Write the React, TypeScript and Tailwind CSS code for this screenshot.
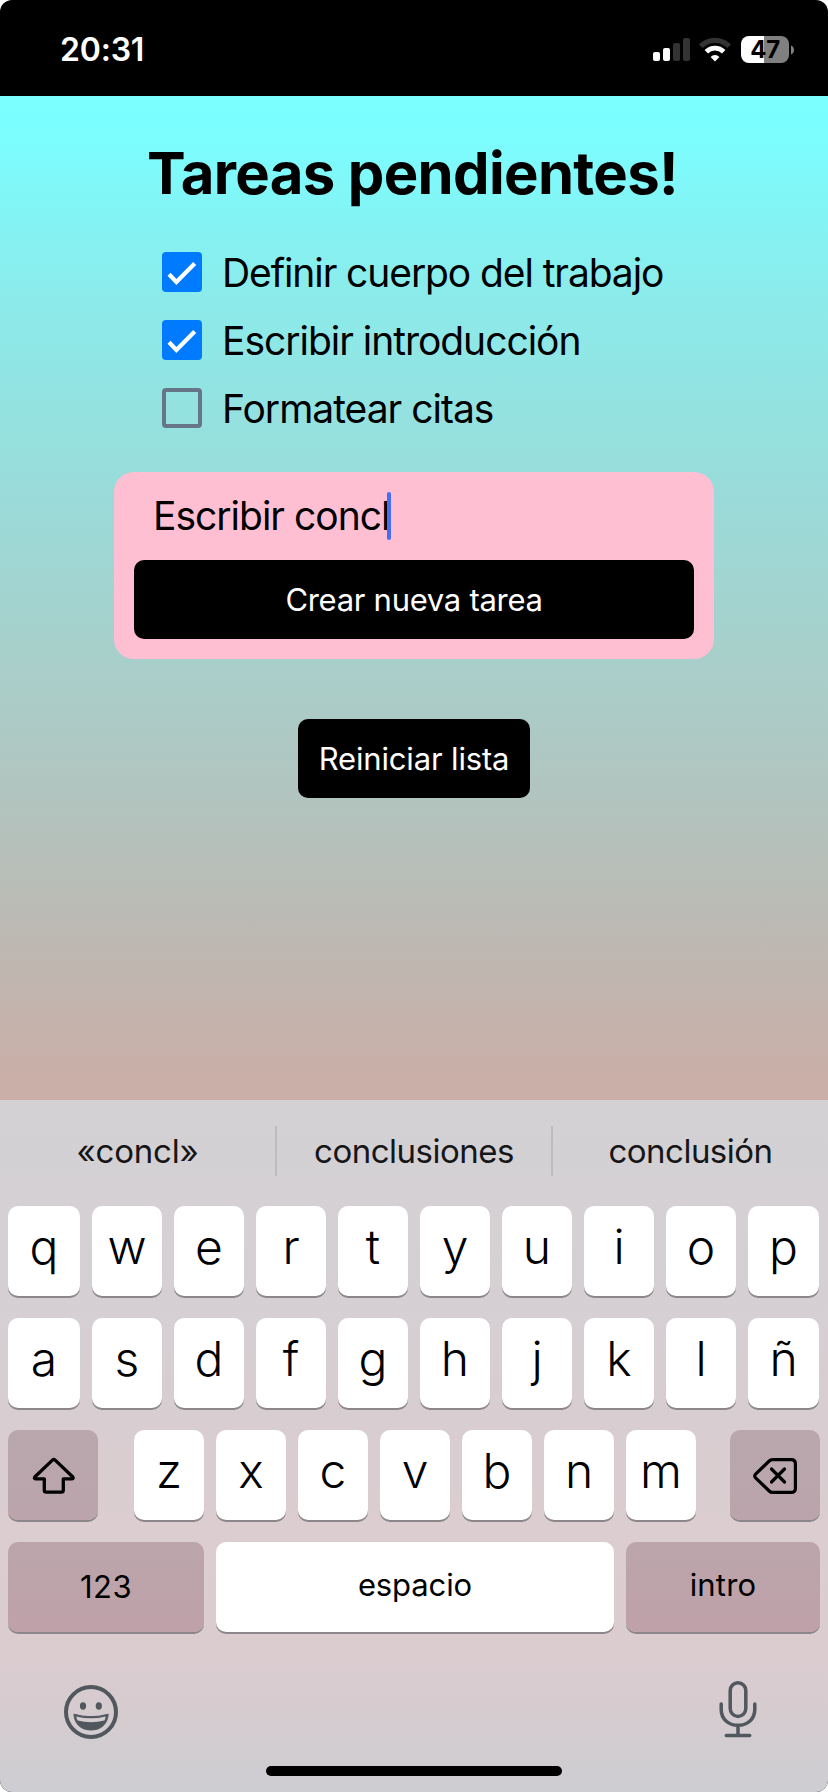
import React from "react";

function SignalIcon() {
  return (
    <svg width="37" height="23" viewBox="0 0 37 23" aria-hidden="true">
      <rect x="0" y="14" width="7" height="9" rx="2" fill="#fff" />
      <rect x="10" y="10" width="7" height="13" rx="2" fill="#fff" />
      <rect x="20" y="5" width="7" height="18" rx="2" fill="#333" />
      <rect x="30" y="0" width="7" height="23" rx="2" fill="#333" />
    </svg>
  );
}

function WifiIcon() {
  return (
    <svg width="32" height="25" viewBox="0 0 32 25" aria-hidden="true">
      <path d="M1.8 9.2a20 20 0 0 1 28.4 0" fill="none" stroke="#333" strokeWidth="5.2" />
      <path d="M7.3 14.7a12.3 12.3 0 0 1 17.4 0" fill="none" stroke="#fff" strokeWidth="4.8" />
      <path d="M16 24.4l-4.4-4.5a6.3 6.3 0 0 1 8.8 0z" fill="#fff" />
    </svg>
  );
}

function Battery() {
  return (
    <div className="flex items-center gap-[2px]">
      <div className="flex h-[27px] w-12 items-center justify-center rounded-[8px] bg-[linear-gradient(90deg,#fff_23px,#808080_23px)] text-[24px] leading-none font-bold tracking-[-0.3px] text-black">
        47
      </div>
      <svg width="3" height="10" viewBox="0 0 3 10" aria-hidden="true">
        <path d="M0 0.5C2 1 3 3 3 5S2 9 0 9.5z" fill="#808080" />
      </svg>
    </div>
  );
}

function CheckBox({ checked }: { checked: boolean }) {
  if (!checked) return <span className="h-10 w-10 shrink-0 rounded-[4px] border-4 border-[#667587]" />;
  return (
    <span className="h-10 w-10 shrink-0 rounded-[4px] bg-[#007aff]">
      <svg width="40" height="40" viewBox="0 0 40 40" aria-hidden="true">
        <path d="M7 22.3L14.4 30L32.7 11.5" fill="none" stroke="#fff" strokeWidth="4.2" />
      </svg>
    </span>
  );
}

function ShiftIcon() {
  return (
    <svg width="44" height="38" viewBox="-0.8 -0.8 44 38" fill="none" stroke="#000" strokeWidth="3.3" strokeLinejoin="round" aria-hidden="true">
      <path d="M20.9 3.1Q22 2.1 23.1 3.1L40.8 20Q42.2 22 40.2 22H31.5V33.200Q31.500 35.400 29.500 35.400H14.500Q12.500 35.400 12.500 33.200V22H3.800Q1.800 22 3.200 20Z" />
    </svg>
  );
}

function DeleteIcon() {
  return (
    <svg width="46" height="38" viewBox="0 -1 46 38" fill="none" stroke="#000" strokeWidth="3.2" strokeLinecap="round" strokeLinejoin="round" aria-hidden="true">
      <path d="M20.5 2.600H39.200Q43.400 2.600 43.400 6.800V31.200Q43.400 35.400 39.200 35.400H20.500Q18.600 35.400 17.200 34L3.600 20.800Q1.800 19 3.600 17.200L17.200 4Q18.600 2.600 20.500 2.600Z" />
      <path d="M19.5 12L32.500 25M32.500 12L19.500 25" />
    </svg>
  );
}

function EmojiIcon() {
  return (
    <svg width="54" height="54" viewBox="0 0 54 54" aria-hidden="true">
      <circle cx="27" cy="27" r="25" fill="none" stroke="#50575d" strokeWidth="4" />
      <ellipse cx="19" cy="21" rx="3.1" ry="3.7" fill="#50575d" />
      <ellipse cx="34.8" cy="21" rx="3.1" ry="3.7" fill="#50575d" />
      <path d="M9.9 29.2Q27 34.2 44.2 29.2C43.5 38.5 37.5 45 27 45S10.500 38.500 9.900 29.200Z" fill="#50575d" stroke="#50575d" strokeWidth="1" strokeLinejoin="round" />
      <path d="M12.300 31.400Q27 35.200 41.700 31.400Q41.300 33.800 40.400 35.500Q27 38.800 13.700 35.500Q12.600 33.800 12.300 31.400Z" fill="#d5cdd1" />
    </svg>
  );
}

function MicIcon() {
  return (
    <svg width="38" height="57" viewBox="0 0 38 57" fill="none" stroke="#50575d" strokeWidth="3.5" strokeLinecap="round" aria-hidden="true">
      <rect x="11.200" y="1.800" width="15.600" height="33.600" rx="7.800" />
      <path d="M2.200 23v5.500C2.200 38 9.500 44.300 19 44.300S35.800 38 35.800 28.500V23M19 44.300v10M7.300 54.500h23.400" />
    </svg>
  );
}

const keyShadow = "shadow-[0_2px_0_#8c868a]";

function LetterKey({ children }: { children: string }) {
  return (
    <button className={`flex h-[90px] min-w-0 items-center justify-center rounded-[10px] bg-white pb-[9px] text-[48px] leading-none font-[350] ${keyShadow}`}>
      {children}
    </button>
  );
}

const darkKey = `flex items-center justify-center rounded-[10px] text-[31px] leading-none ${keyShadow}`;

const tasks = [
  { text: "Definir cuerpo del trabajo", done: true, tracking: "tracking-[-1.1px]" },
  { text: "Escribir introducción", done: true, tracking: "tracking-[-1.03px]" },
  { text: "Formatear citas", done: false, tracking: "tracking-[-1px]" },
];

export default function App() {
  return (
    <div className="h-[1792px] w-[828px] bg-white font-['Inter','Liberation_Sans',sans-serif] text-black">
      <div className="flex h-full flex-col overflow-hidden rounded-[12px] bg-black">
        <header className="flex h-24 shrink-0 items-center justify-between pt-[3px] pr-[34px] pl-[60px] text-white">
          <div className="text-[32px] leading-none font-semibold tracking-[-0.2px]">20:31</div>
          <div className="flex items-center gap-[10px]">
            <div className="-mr-px">
              <SignalIcon />
            </div>
            <WifiIcon />
            <Battery />
          </div>
        </header>

        <main className="flex h-[1004px] shrink-0 flex-col items-center bg-[linear-gradient(180deg,#7affff_0%,#7cfdff_4%,#8bebea_20%,#9adbd9_40%,#a8cfca_56%,#b2c4bf_70%,#bdb8b2_84%,#caafa8_98%,#caafa8_100%)]">
          <h1 className="mt-[41px] pr-[3px] text-[58px] leading-[72px] font-bold tracking-[-0.65px] whitespace-nowrap">Tareas pendientes!</h1>
          <ul className="mt-[43px] flex w-[504px] flex-col gap-7">
            {tasks.map((t) => (
              <li key={t.text} className="flex h-10 items-center gap-5">
                <CheckBox checked={t.done} />
                <span className={`text-[39px] leading-none whitespace-nowrap ${t.tracking}`}>{t.text}</span>
              </li>
            ))}
          </ul>
          <form className="mt-11 flex h-[187px] w-[600px] flex-col justify-between rounded-[20px] bg-[#ffbfd3] px-5 pt-5 pb-5">
            <div className="flex h-12 items-center pl-[19px]">
              <span className="pb-px text-[39px] leading-none tracking-[-1px] whitespace-nowrap">Escribir concl</span>
              <span className="-ml-[2px] h-12 w-1 rounded-full bg-[#466ef5]" />
            </div>
            <button type="button" className="h-[79px] rounded-[10px] bg-black text-[31px] leading-none tracking-[-0.29px] text-white">
              Crear nueva tarea
            </button>
          </form>
          <button className="mt-[60px] h-[79px] w-[232px] rounded-[10px] bg-black text-[31px] leading-none tracking-[-0.15px] whitespace-nowrap text-white">
            Reiniciar lista
          </button>
        </main>

        <section className="flex h-[692px] shrink-0 flex-col bg-[linear-gradient(180deg,#d3d1d4_0%,#d5d0d4_25%,#d8cdd1_45%,#dccdd0_66%,#dbccd0_80%,#d6cbcf_88%,#d1cdd1_94%,#cecdd2_100%)]">
          <div className="mt-[26px] grid h-[50px] grid-cols-[277px_276px_275px] items-center text-center text-[33px] leading-none text-[#161618]">
            <div className="flex h-full items-center justify-center border-r-2 border-[#bfbcc0] tracking-[-0.2px]">«concl»</div>
            <div className="flex h-full items-center justify-center border-r-2 border-[#bfbcc0] tracking-[-0.49px]">conclusiones</div>
            <div className="flex h-full items-center justify-center tracking-[-0.52px]">conclusión</div>
          </div>
          <div className="mt-[30px] flex flex-col gap-[22px] px-2">
            {["qwertyuiop", "asdfghjklñ"].map((row) => (
              <div key={row} className="grid grid-cols-[72px_repeat(8,70px)_71px] gap-3">
                {row.split("").map((k) => (
                  <LetterKey key={k}>{k}</LetterKey>
                ))}
              </div>
            ))}
            <div className="flex justify-between">
              <button className={`${darkKey} h-[90px] w-[90px] bg-[linear-gradient(180deg,#b9a7ae,#bba4ab)]`}>
                <ShiftIcon />
              </button>
              <div className="grid grid-cols-[repeat(7,70px)] gap-3 pl-[2px]">
                {"zxcvbnm".split("").map((k) => (
                  <LetterKey key={k}>{k}</LetterKey>
                ))}
              </div>
              <button className={`${darkKey} h-[90px] w-[90px] bg-[linear-gradient(180deg,#b9a7ae,#bba4ab)]`}>
                <DeleteIcon />
              </button>
            </div>
            <div className="grid h-[90px] grid-cols-[196px_398px_194px] gap-3">
              <button className={`${darkKey} bg-[linear-gradient(180deg,#bba5ab,#bfa1a9)] pb-[2px] tracking-[0.4px]`}>123</button>
              <button className={`${darkKey} bg-white pb-[5px] tracking-[-0.1px]`}>espacio</button>
              <button className={`${darkKey} bg-[linear-gradient(180deg,#bba5ab,#bfa1a9)] pb-[5px] tracking-[0.2px]`}>intro</button>
            </div>
          </div>
          <div className="mt-[49px] flex items-start justify-between pr-[71px] pl-16">
            <div className="pt-[4px]">
              <EmojiIcon />
            </div>
            <MicIcon />
          </div>
          <div className="mt-auto mb-4 h-[10px] w-[296px] self-center rounded-full bg-black" />
        </section>
      </div>
    </div>
  );
}
